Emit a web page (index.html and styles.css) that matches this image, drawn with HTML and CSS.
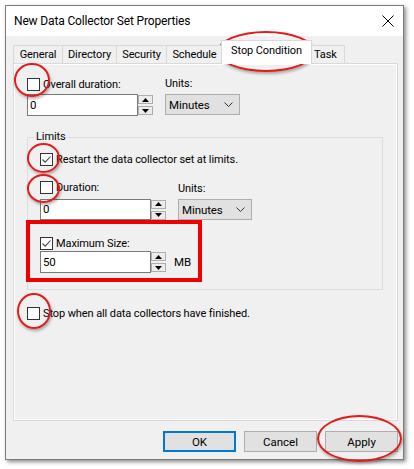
FILE: index.html
```html
<!DOCTYPE html>
<html>
<head>
<meta charset="utf-8">
<link rel="stylesheet" href="styles.css">
</head>
<body>
<div class="stage">
  <div class="window">
    <div class="titlebar">
      <span class="title">New Data Collector Set Properties</span>
      <svg class="close" width="12" height="12" viewBox="0 0 12 12"><path d="M0.5 0.5 L11.5 11.5 M11.5 0.5 L0.5 11.5" stroke="#000" stroke-width="1" fill="none"/></svg>
    </div>
    <div class="client">
      <div class="tabs">
        <div class="tab t-general">General</div>
        <div class="tab t-directory">Directory</div>
        <div class="tab t-security">Security</div>
        <div class="tab t-schedule">Schedule</div>
        <div class="tab active">Stop Condition</div>
        <div class="tab t-task">Task</div>
      </div>
      <div class="panel">
        <div class="pair">
          <label class="check"><span class="box"></span><span>Overall duration:</span></label>
          <span class="lbl">Units:</span>
          <div class="spinbox">
            <div class="field">0</div>
            <div class="spin">
              <span class="sbtn"><svg width="7" height="4" viewBox="0 0 7 4"><path d="M0 4 L3.5 0 L7 4 Z" fill="#000"/></svg></span>
              <span class="sbtn"><svg width="7" height="4" viewBox="0 0 7 4"><path d="M0 0 L3.5 4 L7 0 Z" fill="#000"/></svg></span>
            </div>
          </div>
          <div class="combo"><span>Minutes</span><svg width="9" height="5" viewBox="0 0 9 5"><path d="M0.5 0.5 L4.5 4.5 L8.5 0.5" stroke="#333" stroke-width="1" fill="none"/></svg></div>
        </div>

        <div class="group">
          <div class="group-title">Limits</div>
          <label class="check restart"><span class="box"><svg width="11" height="11" viewBox="0 0 11 11"><path d="M1.5 5.5 L4.2 8.2 L9.5 2.5" stroke="#444" stroke-width="1.1" fill="none"/></svg></span><span>Restart the data collector set at limits.</span></label>
          <div class="pair dur">
            <label class="check"><span class="box"></span><span>Duration:</span></label>
            <span class="lbl units2">Units:</span>
            <div class="spinbox">
              <div class="field">0</div>
              <div class="spin">
                <span class="sbtn"><svg width="7" height="4" viewBox="0 0 7 4"><path d="M0 4 L3.5 0 L7 4 Z" fill="#000"/></svg></span>
                <span class="sbtn"><svg width="7" height="4" viewBox="0 0 7 4"><path d="M0 0 L3.5 4 L7 0 Z" fill="#000"/></svg></span>
              </div>
            </div>
            <div class="combo c2"><span>Minutes</span><svg width="9" height="5" viewBox="0 0 9 5"><path d="M0.5 0.5 L4.5 4.5 L8.5 0.5" stroke="#333" stroke-width="1" fill="none"/></svg></div>
          </div>
          <div class="highlight">
            <label class="check"><span class="box"><svg width="11" height="11" viewBox="0 0 11 11"><path d="M1.5 5.5 L4.2 8.2 L9.5 2.5" stroke="#444" stroke-width="1.1" fill="none"/></svg></span><span>Maximum Size:</span></label>
            <div class="size-row">
              <div class="spinbox">
                <div class="field">50</div>
                <div class="spin">
                  <span class="sbtn"><svg width="7" height="4" viewBox="0 0 7 4"><path d="M0 4 L3.5 0 L7 4 Z" fill="#000"/></svg></span>
                  <span class="sbtn"><svg width="7" height="4" viewBox="0 0 7 4"><path d="M0 0 L3.5 4 L7 0 Z" fill="#000"/></svg></span>
                </div>
              </div>
              <span class="unit">MB</span>
            </div>
          </div>
        </div>

        <label class="check stop"><span class="box"></span><span>Stop when all data collectors have finished.</span></label>
      </div>
      <div class="buttons">
        <button class="btn default">OK</button>
        <button class="btn">Cancel</button>
        <button class="btn">Apply</button>
      </div>
    </div>
  </div>

  <span class="ring r-overall"></span>
  <span class="ring r-tab"></span>
  <span class="ring r-restart"></span>
  <span class="ring r-duration"></span>
  <span class="ring r-stop"></span>
  <span class="ring r-apply"></span>
</div>
</body>
</html>
```

FILE: styles.css
```css
* { box-sizing: border-box; }
html, body { margin: 0; padding: 0; background: #fff; }
body {
  font-family: Roboto, "Liberation Sans", sans-serif;
  font-size: 11px;
  letter-spacing: -0.1px;
  color: #000;
}
.stage { position: relative; width: 414px; height: 469px; overflow: hidden; padding: 5px 0 0 5px; }

.window {
  width: 399px;
  height: 455px;
  border: 1px solid #7c7c7c;
  background: #f0f0f0;
  box-shadow: 2px 2px 4px rgba(0,0,0,0.45);
  display: flex;
  flex-direction: column;
}
.titlebar {
  height: 30px;
  background: #fff;
  display: flex;
  align-items: center;
  justify-content: space-between;
  padding: 0 8px 0 8px;
}
.title { font-size: 12px; letter-spacing: -0.15px; }
.close { display: block; margin-right: 1px; }

.client { padding: 4px 5px 0 7px; display: flex; flex-direction: column; }

.tabs { display: flex; align-items: flex-end; height: 23px; position: relative; z-index: 2; }
.tab {
  height: 18px;
  border: 1px solid #d9d9d9;
  border-bottom: none;
  background: #f0f0f0;
  text-align: center;
  line-height: 17px;
  margin-left: -1px;
  white-space: nowrap;
}
.t-general { width: 50px; margin-left: 0; }
.t-directory { width: 55px; }
.t-security { width: 51px; }
.t-schedule { width: 57px; }
.tab.active {
  width: 91px;
  height: 24px;
  margin: 0 -2px -1px -2px;
  background: #fff;
  position: relative;
  z-index: 3;
  line-height: 20px;
}
.t-task { width: 35px; margin-left: 0; text-align: left; padding-left: 3px; }

.panel {
  height: 358px;
  border: 1px solid #d9d9d9;
  box-shadow: inset 0 0 0 1px #fff;
  padding: 12px 13px 0 13px;
  display: flex;
  flex-direction: column;
  align-items: flex-start;
}

.check { display: flex; align-items: center; height: 16px; gap: 3px; white-space: nowrap; }
.box {
  width: 13px; height: 13px;
  border: 1px solid #333;
  background: #fff;
  display: flex; align-items: center; justify-content: center;
  flex: none;
}
.box svg { display: block; }

.pair {
  display: grid;
  grid-template-columns: 138px 75px;
  grid-template-rows: 16px 22px;
  row-gap: 2px;
  align-items: center;
}
.lbl { line-height: 16px; }

.spinbox { display: flex; height: 22px; align-self: start; }
.field {
  width: 111px;
  height: 22px;
  border: 1px solid #7a7a7a;
  background: #fff;
  line-height: 20px;
  padding-left: 2px;
  font-size: 11.5px;
}
.spin {
  width: 15px;
  height: 22px;
  display: flex;
  flex-direction: column;
  justify-content: center;
  gap: 2px;
}
.sbtn {
  height: 9px;
  border: 1px solid #adadad;
  background: #ececec;
  display: flex; align-items: center; justify-content: center;
}
.sbtn svg { display: block; }

.combo {
  align-self: start;
  height: 21px;
  border: 1px solid #adadad;
  background: #e1e1e1;
  display: flex;
  align-items: center;
  justify-content: space-between;
  padding: 0 6px 0 3px;
  font-size: 11.5px;
}
.combo svg { display: block; }

.group {
  margin-top: 21px;
  width: 356px;
  border: 1px solid #dcdcdc;
  padding: 0 0 7px 12px;
  display: flex;
  flex-direction: column;
  align-items: flex-start;
}
.group-title {
  margin: -9px 0 0 -6px;
  padding: 0 2px;
  line-height: 16px;
  background: #f0f0f0;
}
.restart { margin-top: 6px; }
.dur { margin-top: 12px; row-gap: 4px; grid-template-rows: 16px 21px; }
.dur .field, .dur .spin, .dur .spinbox { height: 21px; }
.dur .field { line-height: 19px; }
.units2 { position: relative; top: 2px; }
.c2 { width: 74px; }

.highlight {
  margin-left: -14px;
  width: 176px;
  border: 4px solid #ee0000;
  padding: 11px 0 5px 10px;
}
.size-row { display: flex; align-items: center; gap: 8px; }
.unit { font-size: 11.5px; }

.stop { margin-top: 15px; }

.buttons { display: flex; justify-content: flex-end; gap: 8px; margin-top: 10px; }
.btn {
  width: 73px;
  height: 21px;
  border: 1px solid #adadad;
  background: #e1e1e1;
  font: inherit;
  font-size: 11.5px;
  color: #000;
  padding: 0;
}
.btn.default { border: 2px solid #0078d7; }

.ring {
  position: absolute;
  border: 2px solid #e21b1b;
  border-radius: 50%;
  box-shadow: 1px 2px 3px rgba(0,0,0,0.3);
}
.r-overall { left: 14px; top: 63px; width: 36px; height: 34px; }
.r-tab { left: 217px; top: 31px; width: 98px; height: 41px; }
.r-restart { left: 27px; top: 143px; width: 33px; height: 30px; }
.r-duration { left: 27px; top: 174px; width: 33px; height: 29px; }
.r-stop { left: 17px; top: 293px; width: 34px; height: 36px; }
.r-apply { left: 317px; top: 415px; width: 85px; height: 47px; }
```
